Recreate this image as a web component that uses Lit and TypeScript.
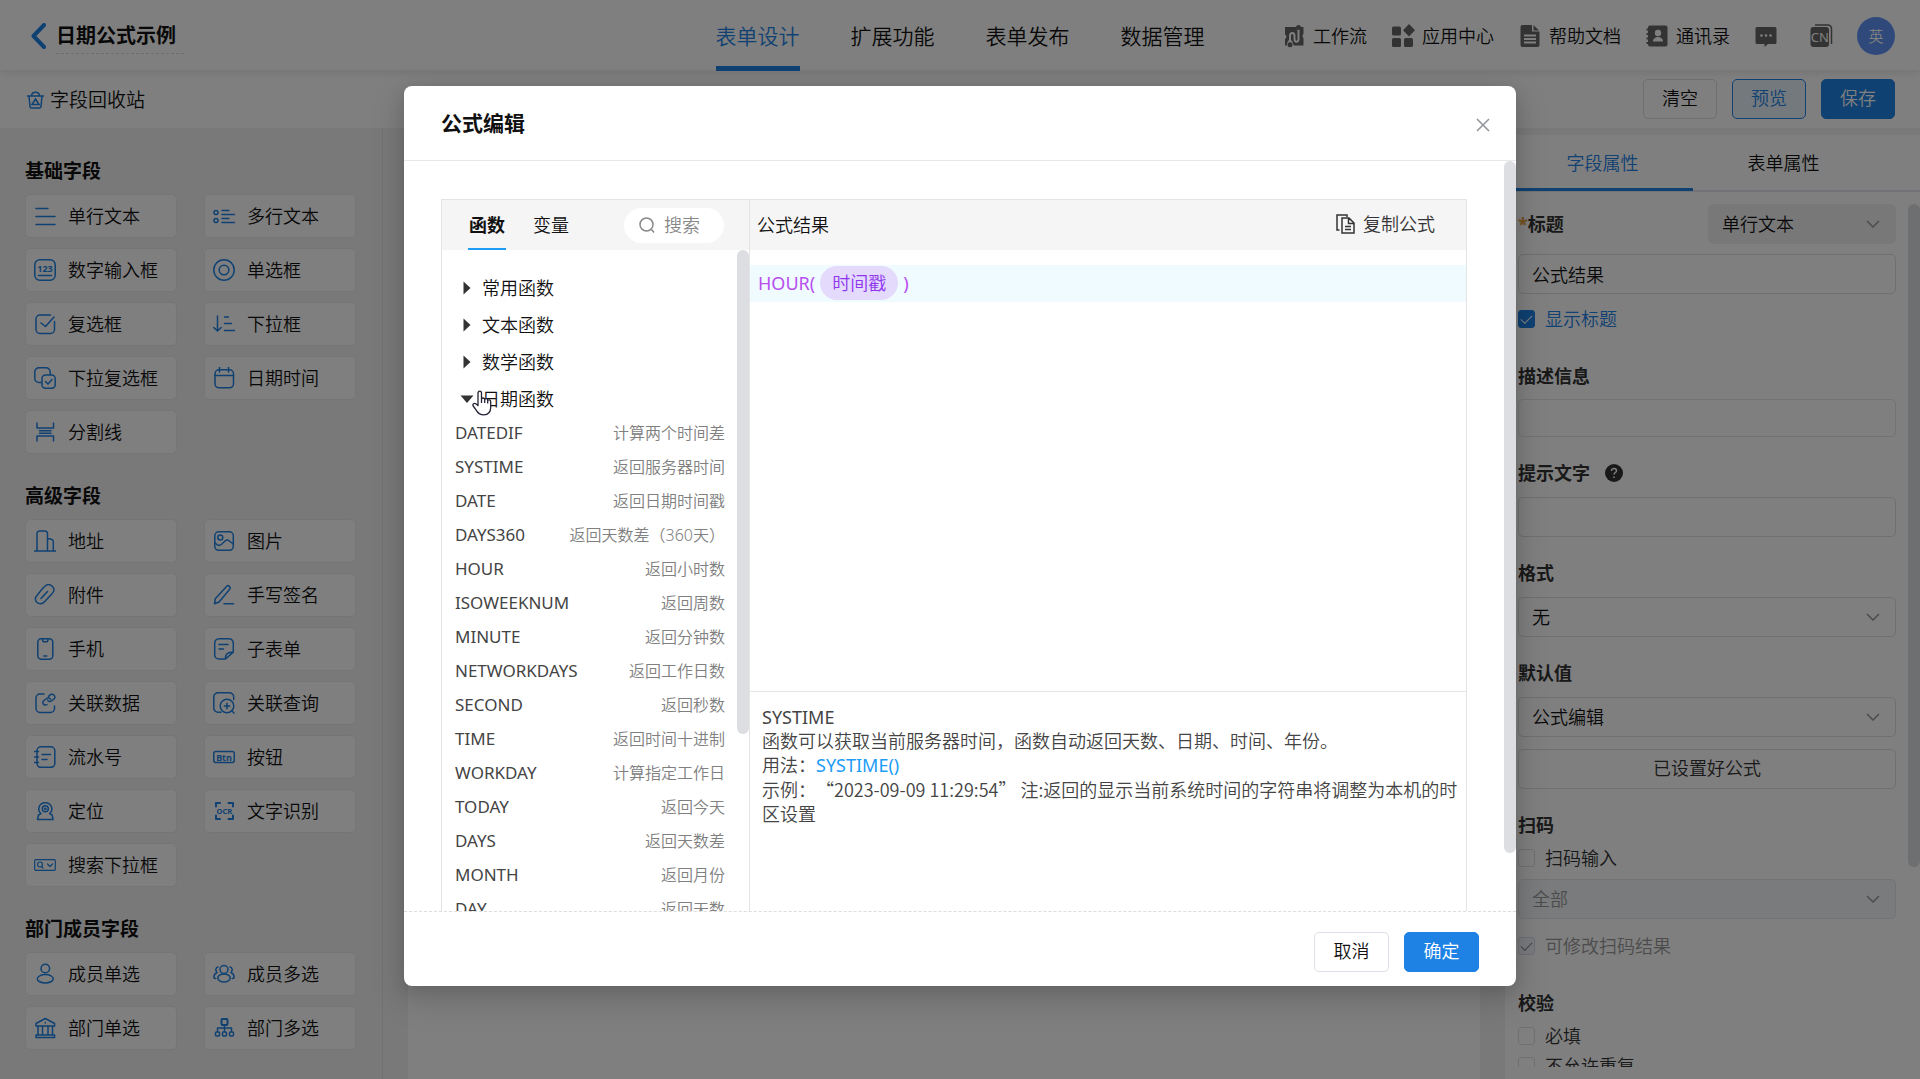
import { LitElement, html, svg, css, nothing } from "lit";
import { customElement, state } from "lit/decorators.js";
import { classMap } from "lit/directives/class-map.js";

type Field = { icon: string; label: string };
type Group = { title: string; fields: Field[] };

const groups: Group[] = [
  {
    title: "基础字段",
    fields: [
      { icon: "line", label: "单行文本" },
      { icon: "lines", label: "多行文本" },
      { icon: "number", label: "数字输入框" },
      { icon: "radio", label: "单选框" },
      { icon: "check", label: "复选框" },
      { icon: "drop", label: "下拉框" },
      { icon: "multi", label: "下拉复选框" },
      { icon: "date", label: "日期时间" },
      { icon: "divider", label: "分割线" },
    ],
  },
  {
    title: "高级字段",
    fields: [
      { icon: "address", label: "地址" },
      { icon: "image", label: "图片" },
      { icon: "attach", label: "附件" },
      { icon: "sign", label: "手写签名" },
      { icon: "phone", label: "手机" },
      { icon: "subform", label: "子表单" },
      { icon: "link", label: "关联数据" },
      { icon: "query", label: "关联查询" },
      { icon: "serial", label: "流水号" },
      { icon: "button", label: "按钮" },
      { icon: "locate", label: "定位" },
      { icon: "ocr", label: "文字识别" },
      { icon: "searchdrop", label: "搜索下拉框" },
    ],
  },
  {
    title: "部门成员字段",
    fields: [
      { icon: "user", label: "成员单选" },
      { icon: "users", label: "成员多选" },
      { icon: "dept", label: "部门单选" },
      { icon: "depts", label: "部门多选" },
    ],
  },
];

const functions: [string, string][] = [
  ["DATEDIF", "计算两个时间差"],
  ["SYSTIME", "返回服务器时间"],
  ["DATE", "返回日期时间戳"],
  ["DAYS360", "返回天数差（360天）"],
  ["HOUR", "返回小时数"],
  ["ISOWEEKNUM", "返回周数"],
  ["MINUTE", "返回分钟数"],
  ["NETWORKDAYS", "返回工作日数"],
  ["SECOND", "返回秒数"],
  ["TIME", "返回时间十进制"],
  ["WORKDAY", "计算指定工作日"],
  ["TODAY", "返回今天"],
  ["DAYS", "返回天数差"],
  ["MONTH", "返回月份"],
  ["DAY", "返回天数"],
];

const glyphs: Record<string, unknown> = {
  line: svg`<path d="M2 3.5h12M2 11.5h19M2 19.5h19"/>`,
  lines: svg`<circle cx="3" cy="7.5" r="2"/><circle cx="3" cy="15.5" r="2"/><path d="M9 5.5h7M9 9.5h13M9 13.5h7M9 17.5h13"/>`,
  number: svg`<rect x=".8" y=".8" width="20.4" height="20.4" rx="5"/><text class="t" x="11" y="13" font-size="9">123</text><path d="M4.5 16.5h13"/>`,
  radio: svg`<circle cx="11" cy="11" r="10.2"/><circle cx="11" cy="11" r="4.8"/>`,
  check: svg`<path d="M16.500 2H6a4 4 0 0 0-4 4v10.500a4 4 0 0 0 4 4h10.500a4 4 0 0 0 4-4V8.500M7 10l4.500 3.500L20 4"/>`,
  drop: svg`<path d="M4.500 3v14.500M.8 14.500l3.700 3.500 3.700-3.500M11.500 4h4M11.500 10.500h7M11.500 17.500H22"/>`,
  multi: svg`<path d="M7 15.500H5a4.200 4.200 0 0 1-4.200-4.200V5A4.200 4.200 0 0 1 5 .8h7A4.200 4.200 0 0 1 16.200 5v2.500"/><rect x="8" y="8" width="13.200" height="13.200" rx="3.500"/><path d="M11.500 14.500l2.500 2.500 4-4.500"/>`,
  date: svg`<rect x="2" y="2.800" width="18.500" height="18" rx="4"/><path d="M2 8.500h18.500M6.500.500v4.500M15.500.500v4.500"/>`,
  divider: svg`<path d="M3 2v5h16.500V2M3 20v-5h16.500v5M5.500 9.700h11.500M5.500 12.300h11.500"/>`,
  address: svg`<path d="M.500 21h21.500M3 21V3.500A2.500 2.500 0 0 1 5.500 1h5.500a2.500 2.500 0 0 1 2.500 2.500V21M13.500 8.500l3.800.8a2.500 2.500 0 0 1 2 2.500V21"/>`,
  image: svg`<rect x="1.800" y="1.800" width="18.500" height="18.500" rx="4"/><circle cx="7.300" cy="7.500" r="2.500"/><path d="M2 13l2.500 1.800c1.500 1 2.500.8 3.800-.300l3.800-3.500c1.300-1.200 2.800-1.200 4.200 0l4 3"/>`,
  attach: svg`<path d="M9 4l2-1.800C13.500 0 16.500.500 18.500 2.500s2 5-.500 7.200l-7.500 8C8 20.300 4.800 20.300 2.800 18.300s-2-4.800.500-7.300l5.700-7M7 14.500l6.500-7"/>`,
  sign: svg`<path d="M1.500 19.800l.800-5L13.500 2.500c1-1.200 2-1.200 3 0s1 2 0 3L6 18zM11 19.800h9.500"/>`,
  phone: svg`<rect x="3.800" y=".8" width="15" height="20.500" rx="3.500"/><path d="M8.500 1c0 2.300.5 2.800 1.500 2.800h2.500c1 0 1.500-.5 1.500-2.800M9.800 18h3"/>`,
  subform: svg`<path d="M12.500 21H6a4.300 4.300 0 0 1-4.300-4.300V5.200A4.300 4.300 0 0 1 6 .8h10a4.300 4.300 0 0 1 4.300 4.300v9zM12.500 21c-.300-4.500 1-6.500 7.800-7M6 6.500h9M6 11h4.500"/>`,
  link: svg`<path d="M10 2H6a4 4 0 0 0-4 4v10.500a4 4 0 0 0 4 4h10.500a4 4 0 0 0 4-4V14M13 12.500c-1.500 1-3.500.5-4-1s0-2.500 1.500-3.500l2-1.500c1.500-1 3.500-.500 4.200 1M14.500 4.500c2-2.500 4-3 5.500-1.500s1 3.500-.500 4.500l-2 1.500c-1.500 1-3.300.5-4-.8"/>`,
  query: svg`<path d="M8 20.300H5A4.200 4.200 0 0 1 .8 16V5A4.200 4.200 0 0 1 5 .8h11.500A4.200 4.200 0 0 1 20.700 5v2.500"/><circle cx="14" cy="14" r="6.800"/><path d="M11.300 14h5.400M14 11.300v5.400M18.500 18.500l2.500 2.500"/>`,
  serial: svg`<rect x="3" y=".8" width="17.800" height="20.500" rx="4"/><path d="M.500 5.500h4M.500 11h4M.500 16.500h4M8 8.500h8.500M8 13.500h5"/>`,
  button: svg`<rect x=".8" y="5.500" width="20.500" height="11" rx="2"/><text class="t" x="11" y="14.500" font-size="9">Btn</text>`,
  locate: svg`<path d="M7 13.500c-4-3-2.500-10.700 4.300-10.700s8.300 7.700 4.300 10.700l2.500 1.500 1 4.500H3.500l1-4.500z"/><circle cx="11.300" cy="8.800" r="3"/><circle cx="11.300" cy="8.800" r=".6"/>`,
  ocr: svg`<path stroke-width="2" d="M3 6.500V3h4M15.500 3h4.500v3.500M20 15.500V19h-4.500M7 19H3v-3.500"/><text class="t" x="11.300" y="13.800" font-size="7.500">OCR</text>`,
  searchdrop: svg`<g stroke-width="1.200"><rect x=".7" y="5.700" width="20.600" height="10.600" rx="1"/><circle cx="6" cy="10.500" r="2.500"/><path d="M7.500 12.500l1.500 1.500M13.500 10l2.500 2.500 2.500-2.500"/></g>`,
  user: svg`<circle cx="11.300" cy="5.500" r="4.300"/><ellipse cx="11.300" cy="15.800" rx="8" ry="4.200"/>`,
  users: svg`<circle cx="11" cy="6.500" r="4"/><ellipse cx="11" cy="15" rx="6.200" ry="4"/><path d="M5 4c-2.500.5-3 3.500-1 5.500C2 10.500 1 11.500.8 14c0 1 .7 1.500 2 1.500M17 4c2.500.5 3 3.500 1 5.500 2 1 3 2 3.200 4.500 0 1-.7 1.500-2 1.500"/>`,
  dept: svg`<path d="M2 9V6.500L11.300 1.500l9.300 5V9zM4 9v9M8.500 9v9M14 9v9M18.500 9v9M2 20.500V18h18.600v2.500zM11.300 5.500v.5"/>`,
  depts: svg`<rect x="8.500" y="2" width="6" height="6" rx="1" stroke-width="2"/><path d="M11.500 8v6.500M4.500 14.500v-3.500h14v3.500"/><rect x="2.500" y="15" width="4" height="4" rx="1"/><rect x="9.500" y="15" width="4" height="4" rx="1"/><rect x="16.500" y="15" width="4" height="4" rx="1"/>`,
};

const fieldIcon = (name: string) =>
  html`<svg class="ficon" viewBox="0 0 22 22" aria-hidden="true">${glyphs[name]}</svg>`;

const chevron = html`<svg class="chev" viewBox="0 0 14 8" aria-hidden="true"><path d="M1 1l6 6 6-6" /></svg>`;

const topIcons: Record<string, unknown> = {
  flow: svg`<path d="M4 3h10l1 2.500a2 2 0 0 0 3 0L19 3h2.500v7a2.500 2.500 0 0 0 0 4v7.500H12l-1.500-3a2.500 2.500 0 0 0-5 0l-1 3H3V15a2.500 2.500 0 0 0 0-4.500V3z"/><path class="cut" d="M8 19v-7c0-4 4.500-4 4.500 0v3c0 3.500 4 3.500 4 0V5"/><circle cx="16.500" cy="3.500" r="2.500"/><circle cx="8" cy="20.800" r="2.500"/>`,
  apps: svg`<rect x="1" y="2.500" width="9" height="9" rx="1.500"/><rect x="1" y="14" width="9" height="9" rx="1.500"/><rect x="13" y="14" width="9" height="9" rx="1.500"/><path d="M18 0l6 6.200-6 6.200-6-6.200z"/>`,
  doc: svg`<path d="M4.500 1H14v6.500h7.500V21a2 2 0 0 1-2 2h-15a2 2 0 0 1-2-2V3a2 2 0 0 1 2-2zM15.500 1l5.500 5.500h-5.500z"/><path class="cut" d="M6 11.500h12M6 15h12M6 18.500h12"/>`,
  book: svg`<path d="M5 1.500h15.500a2 2 0 0 1 2 2v17a2 2 0 0 1-2 2H5a2 2 0 0 1-2-2v-17a2 2 0 0 1 2-2z"/><path d="M1.500 5.500h3M1.500 10h3M1.500 14.500h3M1.500 19h3" stroke="#666" stroke-width="2"/><circle class="hole" cx="13" cy="9" r="3.200"/><path class="hole" d="M8 17.500c0-6 10-6 10 0z"/>`,
  msg: svg`<path d="M3 3h18a1.500 1.500 0 0 1 1.500 1.500v14A1.500 1.500 0 0 1 21 20h-7l-3.500 3V20H3a1.500 1.500 0 0 1-1.500-1.500v-14A1.500 1.500 0 0 1 3 3z"/><circle class="hole" cx="7.500" cy="11.500" r="1.300"/><circle class="hole" cx="12" cy="11.500" r="1.300"/><circle class="hole" cx="16.500" cy="11.500" r="1.300"/>`,
  lang: svg`<path d="M6 1h13a3.500 3.500 0 0 1 3.500 3.500V20" fill="none" stroke="#666" stroke-width="1.500"/><rect x="1.500" y="3" width="18.500" height="20" rx="3"/><text x="10.800" y="18" text-anchor="middle" font-size="13" font-weight="400" fill="#fff" font-family="Noto Sans, sans-serif">CN</text>`,
};

const topIcon = (name: string) =>
  html`<svg class="ticon" viewBox="0 0 24 24" aria-hidden="true">${topIcons[name]}</svg>`;

@customElement("app-root")
export class AppRoot extends LitElement {
  static styles = css`
    :host {
      display: block;
      height: 100vh;
      overflow: hidden;
      position: relative;
      font-family: "Noto Sans", "Noto Sans CJK SC", sans-serif;
      font-size: 18px;
      font-weight: 350;
      line-height: 24px;
      color: #111;
      --blue: #1e82e4;
      --line: #dcdfe6;
    }
    * { box-sizing: border-box; }
    button, input, select, textarea { font: inherit; color: inherit; margin: 0; }
    button { cursor: pointer; background: none; border: 0; padding: 0; }
    a { color: inherit; text-decoration: none; }
    ul { list-style: none; margin: 0; padding: 0; }
    h1, h2, h3, p { margin: 0; }
    svg { display: block; flex: none; }

    .page { height: 100%; display: flex; flex-direction: column; background: #f2f2f2; }
    .top {
      flex: none; height: 70px; padding: 0 25px; background: #fff;
      display: grid; grid-template-columns: 1fr auto 1fr;
      box-shadow: 0 2px 10px rgba(0, 0, 0, 0.1); z-index: 1;
    }
    .brand { display: flex; align-items: center; gap: 10px; padding-left: 6px; }
    .back { width: 15px; height: 26px; fill: none; stroke: var(--blue); stroke-width: 4; stroke-linecap: round; stroke-linejoin: round; }
    .brand h1 { font-size: 20px; line-height: 34px; padding-right: 8px; margin-top: 2px; border-bottom: 1px dashed #ddd; }
    .nav { display: flex; gap: 51px; font-size: 21px; }
    .nav a { display: flex; align-items: center; height: 71px; padding-top: 5px; border-bottom: 5px solid transparent; }
    .nav .on { color: var(--blue); border-color: var(--blue); }
    .tools { display: flex; align-items: center; justify-content: flex-end; gap: 24px; }
    .tools a, .tools button { display: flex; align-items: center; gap: 7px; }
    .tools .lang { margin-left: 7px; }
    .ticon { width: 24px; height: 24px; fill: #666; }
    .cut { fill: none; stroke: #fff; stroke-width: 2; }
    .hole { fill: #fff; }
    .tools .avatar { width: 38px; height: 38px; border-radius: 50%; background: #5f94f5; color: #fff; justify-content: center; font-size: 15px; }

    .bar { flex: none; height: 58px; padding: 0 25px 0 27px; background: #fff; display: flex; align-items: center; justify-content: space-between; }
    .recycle { display: flex; align-items: center; gap: 6px; font-size: 19px; padding-top: 2px; }
    .recycle svg { width: 17px; height: 18px; fill: none; stroke: var(--blue); stroke-width: 1.5; }
    .actions { display: flex; gap: 15px; }
    .btn { width: 75px; height: 40px; border: 1px solid var(--line); border-radius: 5px; background: #fff; padding-bottom: 2px; }
    .actions .btn { width: 74px; }
    .btn.soft { color: var(--blue); border-color: var(--blue); background: #e9f3fd; }
    .btn.main { color: #fff; border-color: var(--blue); background: var(--blue); }

    .work { flex: 1; min-height: 0; display: flex; }
    .side { flex: none; width: 383px; padding: 31px 26px 0 25px; border-right: 1px solid #e4e4e4; overflow: hidden; display: flex; flex-direction: column; gap: 30px; }
    .side h2 { font-size: 19px; line-height: 24px; margin-bottom: 11px; }
    .tiles { display: grid; grid-template-columns: 1fr 1fr; gap: 10px 27px; }
    .tile { width: 100%; height: 44px; display: flex; align-items: center; gap: 12px; padding: 0 0 0 8px; border: 1px solid #ebebeb; border-radius: 5px; background: #fff; white-space: nowrap; }
    .ficon { width: 22px; height: 22px; fill: none; stroke: var(--blue); stroke-width: 1.5; stroke-linecap: round; stroke-linejoin: round; }
    .t { fill: var(--blue); stroke: none; text-anchor: middle; font-weight: 700; font-family: "Noto Sans", sans-serif; }
    .canvas { flex: 1; margin: 7px 25px 0; background: #fff; }

    .props { flex: none; width: 415px; margin-top: 7px; background: #fff; display: flex; flex-direction: column; padding-bottom: 12px; position: relative; }
    .ptabs { flex: none; height: 57px; display: flex; padding-left: 7px; border-bottom: 2px solid #e4e7ed; }
    .ptabs button { width: 181px; height: 56px; padding-top: 2px; border-bottom: 3px solid transparent; }
    .ptabs .on { color: var(--blue); border-color: var(--blue); }
    .form { flex: 1; min-height: 0; overflow: hidden; padding: 12px 24px 0 13px; color: #333; }
    .form .lab { display: block; font-weight: 700; line-height: 24px; }
    .row { display: flex; align-items: center; justify-content: space-between; }
    .star { color: #e6a23c; }
    .sel { display: grid; align-items: center; color: #111; }
    .sel > * { grid-area: 1 / 1; }
    .sel select { width: 100%; height: 40px; appearance: none; border: 1px solid var(--line); border-radius: 5px; background: #fff; padding: 0 40px 0 13px; }
    .sel.gray { width: 188px; }
    .sel.gray select { border-color: #f0f0f0; background: #f0f0f0; }
    .sel.off select { background: #f5f7fa; border-color: #e4e7ed; color: #999; opacity: 1; }
    .chev { width: 14px; height: 8px; justify-self: end; margin-right: 16px; fill: none; stroke: #999; stroke-width: 1.500; pointer-events: none; }
    .txt { display: block; width: 100%; height: 40px; border: 1px solid var(--line); border-radius: 5px; background: #fff; padding: 0 13px; color: #111; }
    .txt.area { height: 38px; resize: none; border-color: #e6e6e6; }
    .wide { width: 100%; }
    .tick { display: flex; align-items: center; gap: 10px; height: 30px; }
    .tick input { appearance: none; width: 17px; height: 18px; border: 1px solid var(--line); border-radius: 3px; background: #fff; flex: none; display: grid; place-items: center; }
    .tick input:checked { background: var(--blue); border-color: var(--blue); }
    .tick input:checked::after { content: ""; width: 10px; height: 5px; margin-bottom: 3px; border: solid #fff; border-width: 0 0 1px 1px; rotate: -45deg; }
    .tick.blue { color: var(--blue); }
    .tick.off { color: #999; }
    .tick.off input:checked { background: #f2f6fc; border-color: var(--line); }
    .tick.off input:checked::after { border-color: #888; }
    .mt6 { margin-top: 6px; }
    .mt10 { margin-top: 10px; }
    .mt11 { margin-top: 11px; }
    .mt12 { margin-top: 12px; }
    .mt24 { margin-top: 24px; }
    .mt30 { margin-top: 30px; }
    .help { display: flex; align-items: center; gap: 15px; }
    .help svg { width: 18px; height: 18px; }

    .thumb { position: absolute; right: 0; width: 12px; border-radius: 6px; background: #dddee1; }
    .props .thumb { top: 69px; height: 663px; }

    .mask { position: absolute; inset: 0; z-index: 5; background: rgba(0, 0, 0, 0.5); display: flex; justify-content: center; padding: 86px 24px 93px; }
    .dialog { width: 1112px; max-width: 100%; background: #fff; border-radius: 8px; display: flex; flex-direction: column; box-shadow: 0 12px 32px 4px rgba(0, 0, 0, 0.14), 0 4px 16px rgba(0, 0, 0, 0.1); }
    .dhead { flex: none; height: 75px; padding: 0 26px 0 37px; border-bottom: 1px solid #e8e8e8; display: flex; align-items: center; justify-content: space-between; }
    .dhead h2 { font-size: 21px; }
    .close { padding-top: 3px; }
    .close svg { width: 14px; height: 14px; fill: none; stroke: #909399; stroke-width: 1.500; }
    .dbody { flex: 1; min-height: 0; overflow: hidden; position: relative; padding: 38px 49px 0 37px; }
    .dbody > .thumb { top: 0; bottom: 58px; }
    .dfoot { flex: none; height: 75px; border-top: 1px dashed #ddd; padding: 20px 37px 0; display: flex; justify-content: flex-end; gap: 15px; }

    .box { display: grid; grid-template-columns: 308px 1fr; min-height: 780px; border: 1px solid #e4e4e4; }
    .left { border-right: 1px solid #e4e4e4; position: relative; }
    .left .thumb { top: 50px; height: 484px; }
    .bhead { height: 50px; background: #f5f5f5; display: flex; align-items: center; }
    .ftabs { justify-content: space-between; padding: 0 25px 0 26px; }
    .ftabs > div { display: flex; gap: 26px; }
    .ftabs button { height: 50px; padding: 2px 1px 0; border-bottom: 2px solid transparent; }
    .ftabs .on { font-weight: 700; border-color: #1c9cf5; }
    .search { width: 100px; height: 35px; border-radius: 18px; background: #fff; display: flex; align-items: center; gap: 9px; padding-left: 15px; }
    .search svg { width: 16px; height: 16px; fill: none; stroke: #888; stroke-width: 1.500; }
    .search input { width: 48px; border: 0; padding: 0; background: none; outline: 0; }
    .search input::placeholder { color: #888; opacity: 1; }
    .tree { padding: 18px 24px 0 13px; }
    .cat { width: 100%; height: 37px; display: flex; align-items: center; gap: 8px; padding: 2px 0 0 5px; }
    .cat svg { width: 14px; height: 14px; fill: #333; }
    .fn { width: 100%; height: 34px; display: flex; align-items: center; justify-content: space-between; font-size: 16px; color: #444; }
    .fn span:first-child { font-size: 17px; font-weight: 400; }
    .fn span:last-child { color: #808080; }
    .right { display: flex; flex-direction: column; min-width: 0; }
    .rhead { justify-content: space-between; padding: 0 31px 0 7px; }
    .copy { display: flex; align-items: center; gap: 8px; color: #333; padding-bottom: 3px; }
    .copy svg { width: 19px; height: 20px; fill: none; stroke: #333; stroke-width: 1.500; }
    .code { height: 442px; padding-top: 15px; border-bottom: 1px solid #e4e4e4; }
    .cline { height: 37px; background: #effbfe; padding: 0 0 2px 8px; display: flex; align-items: center; color: #b84df0; font-weight: 400; }
    .chip { background: #e3dafc; color: #8f35ee; border-radius: 17px; padding: 5px 12px; margin: 0 5px; font-weight: 350; }
    .doc { padding: 13px 4px 13px 12px; line-height: 24px; color: #444; text-spacing-trim: space-all; }
    .doc a, .doc .name { font-weight: 400; }
    .doc a { color: #1c9cf5; }
    .sample { font-family: "Noto Sans CJK SC", sans-serif; }
    .hand { position: absolute; left: 30px; top: 190px; width: 20px; height: 26px; fill: #fff; stroke: #223; stroke-width: 1.300; stroke-linejoin: round; pointer-events: none; }
  `;

  @state() private tab = "函数";
  @state() private open = "日期函数";

  private select(label: string, value: string, cls = "", disabled = false) {
    return html`<div class="sel ${cls}">
      <select aria-label=${label} ?disabled=${disabled}><option>${value}</option></select>${chevron}
    </div>`;
  }

  private header() {
    return html`<header class="top">
        <div class="brand">
          <a href="#back" aria-label="返回"><svg class="back" viewBox="0 0 15 26"><path d="M13 2L2.500 13 13 24" /></svg></a>
          <h1>日期公式示例</h1>
        </div>
        <nav class="nav">
          ${["表单设计", "扩展功能", "表单发布", "数据管理"].map(
            (n, i) => html`<a href="#nav${i}" class=${classMap({ on: i === 0 })}>${n}</a>`
          )}
        </nav>
        <div class="tools">
          <a href="#flow">${topIcon("flow")}工作流</a>
          <a href="#apps">${topIcon("apps")}应用中心</a>
          <a href="#docs">${topIcon("doc")}帮助文档</a>
          <a href="#contacts">${topIcon("book")}通讯录</a>
          <button aria-label="消息">${topIcon("msg")}</button>
          <button class="lang" aria-label="语言">${topIcon("lang")}</button>
          <button class="avatar">英</button>
        </div>
      </header>
      <div class="bar">
        <button class="recycle">
          <svg viewBox="0 0 17 18"><path d="M0 5h17M2 5l1 10.500a1.500 1.500 0 0 0 1.500 1.500h8a1.500 1.500 0 0 0 1.500-1.500L15 5M4.500 4.500C5 0 12 0 12.500 4.500M8.500 8l3.500 5.500H5z" /></svg>
          字段回收站
        </button>
        <div class="actions">
          <button class="btn">清空</button>
          <button class="btn soft">预览</button>
          <button class="btn main">保存</button>
        </div>
      </div>`;
  }

  private sidebar() {
    return html`<aside class="side">
      ${groups.map(
        (g) => html`<section>
          <h2>${g.title}</h2>
          <div class="tiles">
            ${g.fields.map((f) => html`<button class="tile">${fieldIcon(f.icon)}${f.label}</button>`)}
          </div>
        </section>`
      )}
    </aside>`;
  }

  private props() {
    return html`<aside class="props">
      <div class="ptabs"><button class="on">字段属性</button><button>表单属性</button></div>
      <div class="form">
        <div class="row">
          <label class="lab" for="title"><span class="star">*</span>标题</label>
          ${this.select("字段类型", "单行文本", "gray")}
        </div>
        <input id="title" class="txt mt10" value="公式结果" />
        <label class="tick blue mt10"><input type="checkbox" checked />显示标题</label>
        <label class="lab mt30" for="desc">描述信息</label>
        <textarea id="desc" class="txt area mt11"></textarea>
        <div class="help mt24">
          <label class="lab" for="hint">提示文字</label>
          <svg viewBox="0 0 18 18" aria-hidden="true"><circle cx="9" cy="9" r="9" fill="#333" /><path d="M6.500 7c0-3.500 5.200-3.300 5 0-.1 1.500-2.500 1.600-2.500 3.500M9 12.500V14" fill="none" stroke="#fff" stroke-width="1.500" /></svg>
        </div>
        <input id="hint" class="txt mt12" />
        <span class="lab mt24">格式</span>
        <div class="mt12">${this.select("格式", "无")}</div>
        <span class="lab mt24">默认值</span>
        <div class="mt12">${this.select("默认值", "公式编辑")}</div>
        <button class="btn wide mt12">已设置好公式</button>
        <span class="lab mt24">扫码</span>
        <label class="tick mt6"><input type="checkbox" />扫码输入</label>
        <div class="mt6">${this.select("扫码类型", "全部", "off", true)}</div>
        <label class="tick off mt12"><input type="checkbox" checked disabled />可修改扫码结果</label>
        <span class="lab mt30">校验</span>
        <label class="tick mt6"><input type="checkbox" />必填</label>
        <label class="tick"><input type="checkbox" />不允许重复</label>
      </div>
      <div class="thumb"></div>
    </aside>`;
  }

  private tree() {
    return html`<div class="tree">
      ${["常用函数", "文本函数", "数学函数", "日期函数"].map((c) => {
        const open = c === this.open;
        return html`<button class="cat" aria-expanded=${open} @click=${() => (this.open = open ? "" : c)}>
            <svg viewBox="0 0 14 14"><path d=${open ? "M.500 3.500h13L7 11z" : "M3.500.500v13l7-6.500z"} /></svg>${c}
          </button>
          ${open
            ? html`<ul>
                ${functions.map(
                  ([n, d]) => html`<li><button class="fn"><span>${n}</span><span>${d}</span></button></li>`
                )}
              </ul>`
            : nothing}`;
      })}
    </div>`;
  }

  private dialog() {
    return html`<div class="mask">
      <div class="dialog" role="dialog" aria-modal="true" aria-labelledby="dt">
        <div class="dhead">
          <h2 id="dt">公式编辑</h2>
          <button class="close" aria-label="关闭"><svg viewBox="0 0 14 14"><path d="M1 1l12 12M13 1L1 13" /></svg></button>
        </div>
        <div class="dbody">
          <div class="box">
            <div class="left">
              <div class="bhead ftabs">
                <div>
                  ${["函数", "变量"].map(
                    (t) => html`<button class=${classMap({ on: t === this.tab })} @click=${() => (this.tab = t)}>${t}</button>`
                  )}
                </div>
                <label class="search">
                  <svg viewBox="0 0 16 16"><circle cx="7.500" cy="7.500" r="6.500" /><path d="M12.500 12.500l2.500 3" /></svg>
                  <input aria-label="搜索" placeholder="搜索" />
                </label>
              </div>
              ${this.tree()}
              <div class="thumb"></div>
              <svg class="hand" viewBox="0 0 20 26"><path d="M6 15.500V3.200c0-2.700 3.500-2.700 3.500 0V9c.5-1.500 3-1.300 3.200.500.7-1.300 2.800-1 3 .800.900-.900 3-.500 3 1.500v5.500c0 4.500-2.500 7.500-7 7.500-3.500 0-5.500-1.500-7-4L1.200 16c-1-2 1-3.300 2.600-2.200zM9.500 9v4M12.700 9.500V13M15.700 10.300V13.500" /></svg>
            </div>
            <div class="right">
              <div class="bhead rhead">
                <span>公式结果</span>
                <button class="copy">
                  <svg viewBox="0 0 19 20"><path d="M6 4h7l5 5v10H6zM12.500 4v5.500H18M3.500 16H1V1h10v2M9 12.500h6M9 15.500h6" /></svg>复制公式
                </button>
              </div>
              <div class="code">
                <div class="cline"><span>HOUR(</span><span class="chip">时间戳</span><span>)</span></div>
              </div>
              <div class="doc">
                <p class="name">SYSTIME</p>
                <p>函数可以获取当前服务器时间，函数自动返回天数、日期、时间、年份。</p>
                <p>用法：<a href="#systime">SYSTIME()</a></p>
                <p class="sample">示例：“2023-09-09 11:29:54” 注:返回的显示当前系统时间的字符串将调整为本机的时区设置</p>
              </div>
            </div>
          </div>
          <div class="thumb"></div>
        </div>
        <div class="dfoot"><button class="btn">取消</button><button class="btn main">确定</button></div>
      </div>
    </div>`;
  }

  render() {
    return html`<div class="page">
        ${this.header()}
        <div class="work">${this.sidebar()}<main class="canvas"></main>${this.props()}</div>
      </div>
      ${this.dialog()}`;
  }
}
